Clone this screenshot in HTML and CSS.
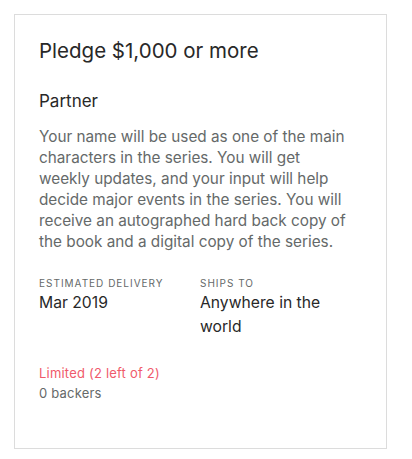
FILE: index.html
```html
<!DOCTYPE html>
<html>
<head>
<meta charset="utf-8">
<link rel="stylesheet" href="styles.css">
</head>
<body>
<div class="card">
  <h2 class="pledge">Pledge $1,000 or more</h2>
  <h3 class="reward-title">Partner</h3>
  <p class="desc">Your name will be used as one of the main characters in the series. You will get weekly updates, and your input will help decide major events in the series. You will receive an autographed hard back copy of the book and a digital copy of the series.</p>
  <div class="meta">
    <div class="meta-col delivery">
      <div class="meta-label">Estimated delivery</div>
      <div class="meta-value">Mar 2019</div>
    </div>
    <div class="meta-col ships">
      <div class="meta-label">Ships to</div>
      <div class="meta-value">Anywhere in the world</div>
    </div>
  </div>
  <div class="limited">Limited (2 left of 2)</div>
  <div class="backers">0 backers</div>
</div>
</body>
</html>
```

FILE: styles.css
```css
* { box-sizing: border-box; }
html, body { margin: 0; padding: 0; background: #fff; }
body {
  font-family: Inter, "Noto Sans", Roboto, sans-serif;
  color: #282828;
  padding: 14px 0 0 14px;
}
.card {
  width: 373px;
  height: 435px;
  border: 1px solid #dcdcdc;
  padding: 22px 24px 0 24px;
}
.pledge {
  margin: 0;
  font-size: 20.5px;
  font-weight: 400;
  line-height: 28px;
  color: #282828;
}
.reward-title {
  margin: 24px 0 0 0;
  font-size: 17px;
  font-weight: 400;
  line-height: 24px;
  color: #282828;
}
.desc {
  margin: 13px 0 0 0;
  max-width: 316px;
  font-size: 15.3px;
  line-height: 21px;
  color: #656969;
}
.meta {
  display: flex;
  margin-top: 24px;
}
.meta-col.delivery { width: 161px; }
.meta-col.ships { width: 130px; }
.meta-label {
  font-size: 10px;
  letter-spacing: 1px;
  text-transform: uppercase;
  color: #656969;
  line-height: 14px;
}
.meta-value {
  font-size: 15.7px;
  line-height: 24px;
  margin-top: 1px;
  color: #282828;
}
.limited {
  margin-top: 24px;
  font-size: 13px;
  letter-spacing: 0.2px;
  line-height: 20px;
  color: #f05a6b;
}
.backers {
  font-size: 13px;
  letter-spacing: 0.2px;
  line-height: 20px;
  color: #656969;
}
```
